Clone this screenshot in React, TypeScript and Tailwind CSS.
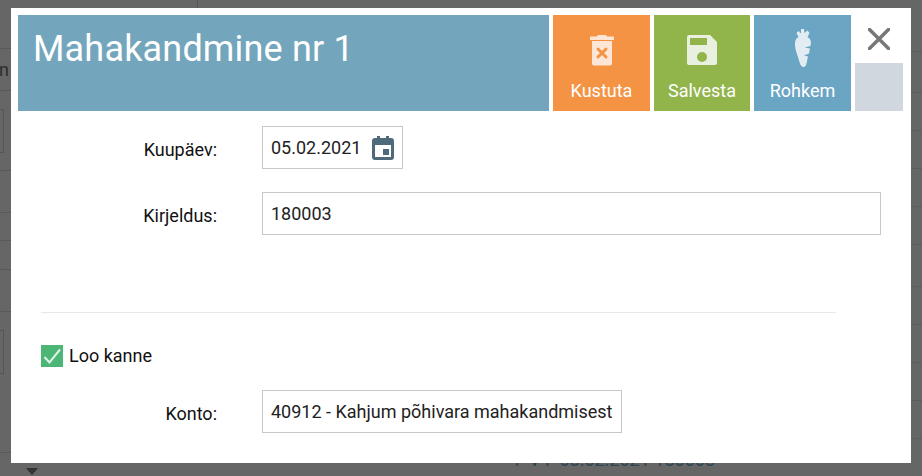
import React from 'react';

const leftRows = [
  { h: 'h-[49px]' },
  { h: 'h-[42px]', text: 'n' },
  { h: 'h-[80px]', box: true },
  { h: 'h-[42px]' },
  { h: 'h-[28px]' },
  { h: 'h-[29px]' },
  { h: 'h-[42px]' },
  { h: 'h-[141px]', box: true },
];

const rightRows = ['h-[52px]', 'h-[41px]', 'h-[38px]', 'h-[38px]', 'h-[38px]', 'h-[38px]', 'h-[42px]', 'h-[38px]', 'h-[38px]', 'h-[38px]', 'h-[38px]'];

const Field: React.FC<{ label: string; className?: string; children: React.ReactNode }> = ({ label, className, children }) => (
  <div className={`flex items-center ${className ?? ''}`}>
    <label className="w-[199px] pt-[3px] text-right text-[#111]">{label}</label>
    <div className="ml-[45px]">{children}</div>
  </div>
);

const ActionButton: React.FC<{ label: string; color: string; width: string; children: React.ReactNode }> = ({ label, color, width, children }) => (
  <button className={`flex h-full ${width} ${color} flex-col items-center text-white`}>
    <span className="flex h-[51px] items-end justify-center">{children}</span>
    <span className="mt-[13px] text-[18px] leading-[24px]">{label}</span>
  </button>
);

const App: React.FC = () => {
  return (
    <div className="relative flex h-[476px] w-[922px] overflow-hidden bg-[#666666] font-['Roboto',sans-serif] text-[18px]">
      {/* dimmed page behind the dialog */}
      <div className="flex w-[11px] flex-col">
        {leftRows.map((r, i) => (
          <div key={i} className={`${r.h} border-b border-[#595959] text-[18px] leading-[42px] text-[#2c2c2c]`}>
            {r.text && <span className="ml-[-1px]">{r.text}</span>}
            {r.box && <div className="mt-[18px] h-[44px] w-[4px] border border-l-0 border-[#555]" />}
          </div>
        ))}
      </div>
      <div className="flex flex-1 flex-col justify-between">
        <div className="h-[8px] w-[187px] border-r border-[#555]" />
        <div className="flex h-[24px] items-start justify-between">
          <div className="flex h-full w-[32px] items-end">
            <div className="mb-[1px] ml-[15px] h-0 w-0 border-x-[6px] border-t-[7px] border-x-transparent border-t-[#333]" />
          </div>
          <div className="mr-[196px] text-[18px] leading-[15px] text-[#2c4552]">F V F 08.02.2021 180003</div>
        </div>
      </div>
      <div className="flex w-[11px] flex-col">
        {rightRows.map((h, i) => (
          <div key={i} className={`${h} border-b border-[#5d5d5d]`} />
        ))}
      </div>

      {/* dialog */}
      <div className="absolute top-[8px] left-[11px] flex h-[455px] w-[900px] flex-col bg-white p-[7px]">
        <div className="flex h-[96px] gap-[4px]">
          <div className="w-[531px] bg-[#73a6bc] pl-[15px] pt-[11px] text-[36px] leading-[47px] tracking-[0.18px] text-white">Mahakandmine nr 1</div>
          <ActionButton label="Kustuta" color="bg-[#f59345]" width="w-[97px]">
            <svg width="24" height="31" viewBox="0 0 24 31">
              <path d="M8 0h8l1 1.500h7V5H0V1.500h7z" fill="#fde6d5" />
              <path d="M2 6h20v22.500a2 2 0 0 1-2 2H4a2 2 0 0 1-2-2z" fill="#fde6d5" />
              <path d="M8 14l8 8M16 14l-8 8" stroke="#f59345" strokeWidth="3" strokeLinecap="round" />
            </svg>
          </ActionButton>
          <ActionButton label="Salvesta" color="bg-[#91b54a]" width="w-[96px]">
            <svg width="30" height="30" viewBox="0 0 30 30" className="mb-[1px]">
              <path d="M2 0h21l7 7v21a2 2 0 0 1-2 2H2a2 2 0 0 1-2-2V2a2 2 0 0 1 2-2z" fill="#e9f0df" />
              <rect x="3" y="3" width="17" height="7" fill="#91b54a" />
              <circle cx="15" cy="22" r="5" fill="#91b54a" />
            </svg>
          </ActionButton>
          <ActionButton label="Rohkem" color="bg-[#6ba5c4]" width="w-[97px]">
            <svg width="16" height="38" viewBox="0 0 16 38" className="mb-[-1px]">
              <path d="M6 0h3l.5 4 3-2.500 2 2.500-2 4c2 1 3.500 3 3.500 6l-.5 3-6 1.500 5.500 1-1 5-5 2 4 1-1.500 7c-.5 2-1.500 3.500-3 3.500s-3-1.500-3.500-3.500L1 22c-.8-3-1-5-1-8 0-3 1.500-5 3.500-6L1.500 4l2-2 2.500 2.500z" fill="#e1ecf3" />
            </svg>
          </ActionButton>
          <div className="flex w-[48px] flex-col">
            <div className="flex h-[48px] items-center justify-center">
              <svg width="22" height="22" viewBox="0 0 22 22">
                <path d="M1.500 1.500l19 19M20.500 1.500l-19 19" stroke="#777777" strokeWidth="3.500" strokeLinecap="round" />
              </svg>
            </div>
            <div className="h-[48px] bg-[#d0d7df]" />
          </div>
        </div>

        <Field label="Kuupäev:" className="mt-[15px]">
          <div className="flex h-[43px] w-[141px] items-center border border-[#c8c8c8] pl-[8px] text-[#222]">
            <span>05.02.2021</span>
            <svg width="22" height="24" viewBox="0 0 22 24" className="ml-[11px] mt-[1px]">
              <path d="M3 2h2V0h3v2h6V0h3v2h2a3 3 0 0 1 3 3v16a3 3 0 0 1-3 3H3a3 3 0 0 1-3-3V5a3 3 0 0 1 3-3zm0 7v12h16V9z" fill="#4f6a7a" fillRule="evenodd" />
              <rect x="11" y="13" width="6" height="6" fill="#4f6a7a" />
            </svg>
          </div>
        </Field>
        <Field label="Kirjeldus:" className="mt-[23px]">
          <div className="flex h-[43px] w-[619px] items-center border border-[#c8c8c8] pl-[8px] text-[#222]">180003</div>
        </Field>

        <div className="ml-[23px] mt-[77px] w-[795px] border-t border-[#e8e8e8]" />

        <div className="ml-[23px] mt-[32px] flex h-[22px] items-center">
          <span className="flex h-[22px] w-[22px] items-center justify-center bg-[#4cb676]">
            <svg width="18" height="16" viewBox="0 0 18 16">
              <path d="M1.500 9l5 5.500L17 1.500" fill="none" stroke="#dff2e6" strokeWidth="2" />
            </svg>
          </span>
          <span className="ml-[6px] pb-[2px] text-[#111]">Loo kanne</span>
        </div>

        <Field label="Konto:" className="mt-[23px]">
          <div className="flex h-[43px] w-[360px] items-center whitespace-nowrap border border-[#c8c8c8] pl-[8px] text-[#222]">40912 - Kahjum põhivara mahakandmisest</div>
        </Field>
      </div>
    </div>
  );
};

export default App;
